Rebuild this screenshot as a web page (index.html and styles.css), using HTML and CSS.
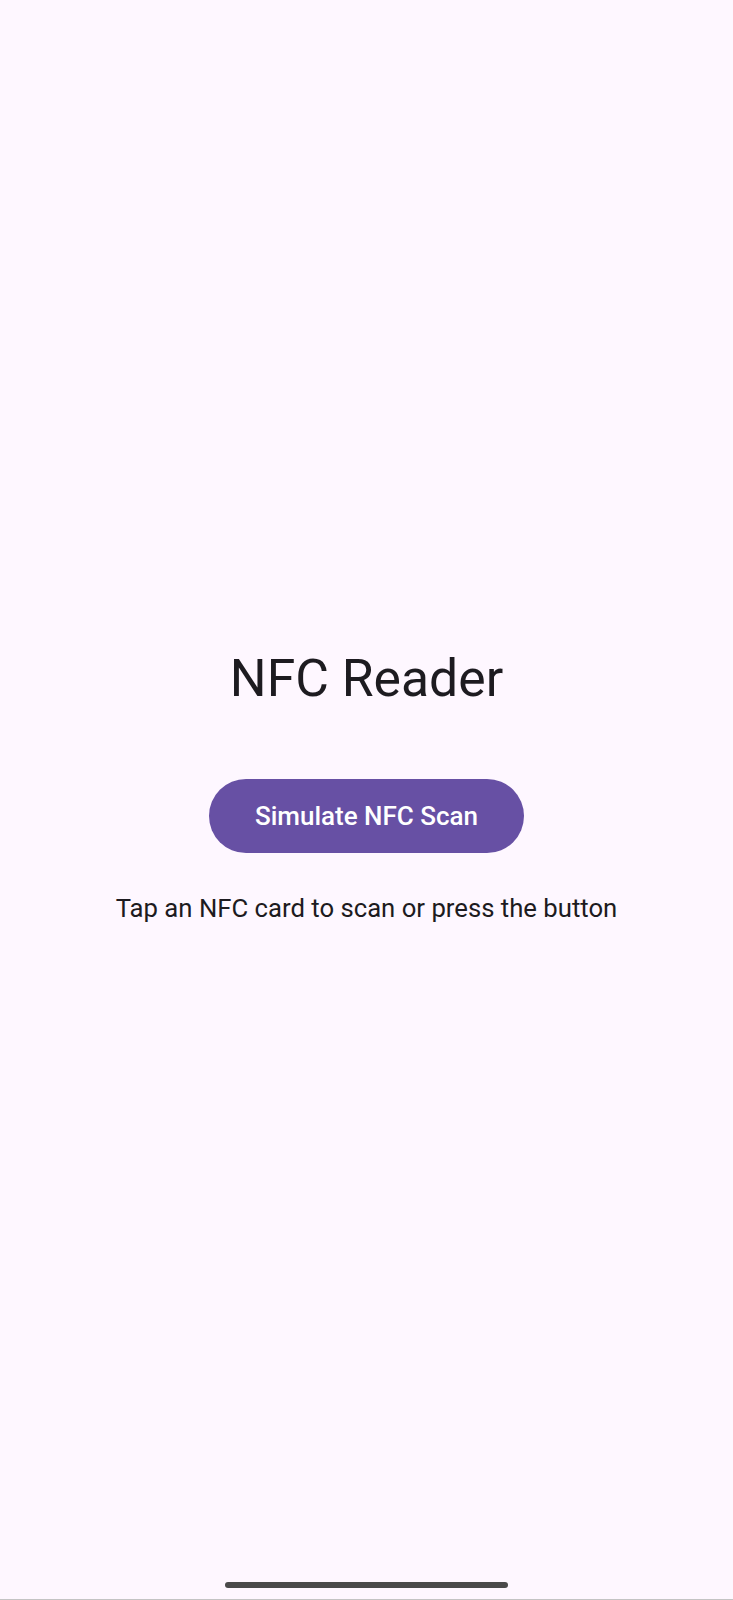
FILE: index.html
```html
<!DOCTYPE html>
<html>
<head>
<meta charset="utf-8">
<link rel="stylesheet" href="styles.css">
</head>
<body>
<div class="screen">
  <main class="content">
    <h1 class="title">NFC Reader</h1>
    <button class="scan-btn">Simulate NFC Scan</button>
    <p class="hint">Tap an NFC card to scan or press the button</p>
  </main>
  <div class="nav">
    <div class="home-bar"></div>
  </div>
</div>
</body>
</html>
```

FILE: styles.css
```css
html, body {
  margin: 0;
  padding: 0;
  background: #fef7ff;
}
.screen {
  height: 1600px;
  box-sizing: border-box;
  display: flex;
  flex-direction: column;
  align-items: center;
  font-family: Roboto, "Noto Sans", sans-serif;
  color: #1d1b20;
  border-bottom: 1px solid #c4c4c4;
}
.content {
  display: flex;
  flex-direction: column;
  align-items: center;
  padding-top: 649px;
}
.title {
  margin: 0;
  font-size: 51.7px;
  line-height: 60px;
  font-weight: 400;
}
.scan-btn {
  margin-top: 70px;
  width: 315px;
  height: 74px;
  border: none;
  border-radius: 37px;
  background: #6750a4;
  color: #ffffff;
  font-family: Roboto, "Noto Sans", sans-serif;
  font-size: 26px;
  font-weight: 500;
  padding: 0;
}
.hint {
  margin: 40px 0 0;
  font-size: 25.7px;
  line-height: 30px;
}
.nav {
  margin-top: auto;
  padding-bottom: 11px;
}
.home-bar {
  width: 283px;
  height: 6px;
  border-radius: 3px;
  background: #4a4a4a;
}
```
